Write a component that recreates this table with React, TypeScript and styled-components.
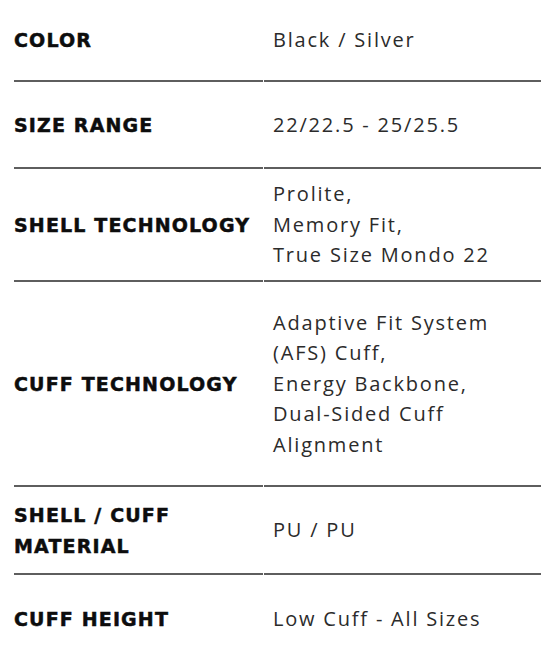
import React from 'react'
import styled, { createGlobalStyle } from 'styled-components'

const GlobalStyle = createGlobalStyle`
  html, body {
    margin: 0;
    padding: 0;
    background: #ffffff;
  }
`

const Table = styled.div`
  width: 541px;
  padding-left: 14px;
  box-sizing: border-box;
`

const Row = styled.div<{ $h: number; $last?: boolean }>`
  display: grid;
  grid-template-columns: 249px 1fr;
  column-gap: 1px;
  height: ${(p) => p.$h}px;

  > div {
    display: flex;
    flex-direction: column;
    justify-content: center;
    padding-top: 1px;
    box-sizing: border-box;
    border-bottom: ${(p) => (p.$last ? 'none' : '2px solid #5e5e5e')};
  }
`

const Label = styled.div`
  font-family: 'DejaVu Sans', sans-serif;
  font-weight: 700;
  font-size: 19px;
  line-height: 31px;
  letter-spacing: 1.15px;
  color: #0d0d0d;
  -webkit-text-stroke: 0.5px #0d0d0d;
  text-transform: uppercase;
`

const Value = styled.div`
  font-family: 'Open Sans', sans-serif;
  font-weight: 400;
  font-size: 20px;
  line-height: 30.6px;
  letter-spacing: 1.8px;
  color: #2b2b2b;
  padding-left: 9px;
`

type Spec = { label: string[]; value: string[]; h: number }

const specs: Spec[] = [
  { label: ['Color'], value: ['Black / Silver'], h: 82 },
  { label: ['Size Range'], value: ['22/22.5 - 25/25.5'], h: 87 },
  { label: ['Shell Technology'], value: ['Prolite,', 'Memory Fit,', 'True Size Mondo 22'], h: 113 },
  {
    label: ['Cuff Technology'],
    value: ['Adaptive Fit System', '(AFS) Cuff,', 'Energy Backbone,', 'Dual-Sided Cuff', 'Alignment'],
    h: 205,
  },
  { label: ['Shell / Cuff', 'Material'], value: ['PU / PU'], h: 88 },
  { label: ['Cuff Height'], value: ['Low Cuff - All Sizes'], h: 88 },
]

const App = () => {
  return (
    <>
      <GlobalStyle />
      <Table>
        {specs.map((s, i) => (
          <Row key={s.label.join(' ')} $h={s.h} $last={i === specs.length - 1}>
            <Label>
              {s.label.map((l) => (
                <span key={l}>{l}</span>
              ))}
            </Label>
            <Value>
              {s.value.map((v) => (
                <span key={v}>{v}</span>
              ))}
            </Value>
          </Row>
        ))}
      </Table>
    </>
  )
}

export default App
